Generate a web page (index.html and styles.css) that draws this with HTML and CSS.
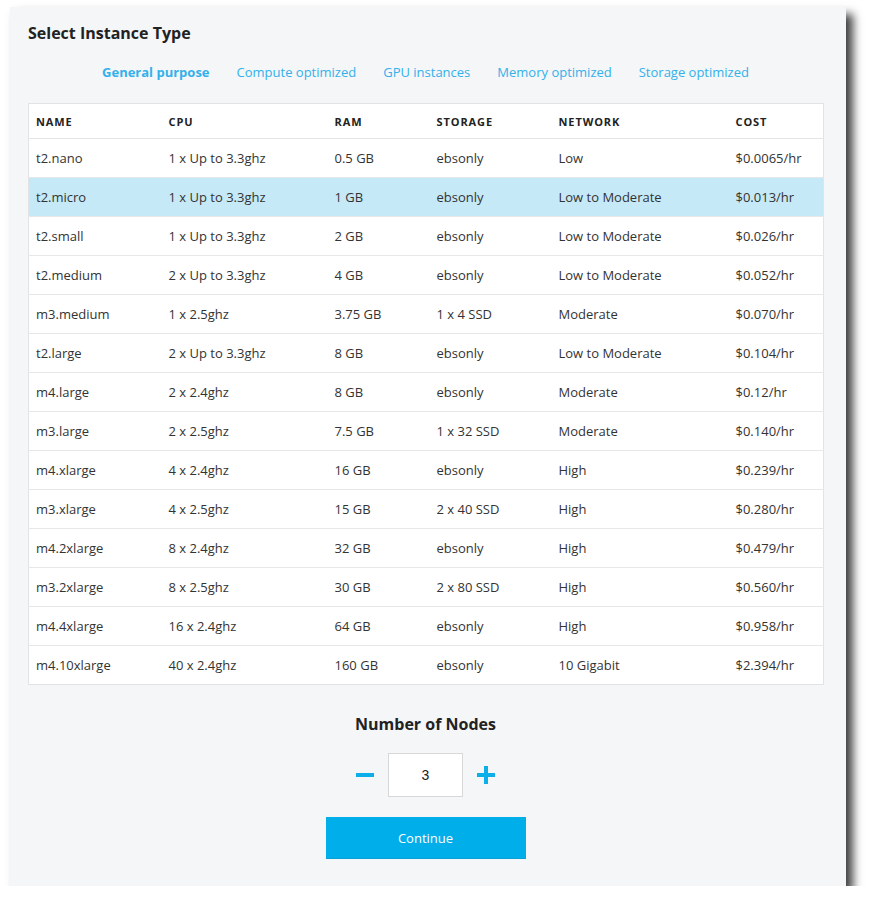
FILE: index.html
```html
<!DOCTYPE html>
<html>
<head>
<meta charset="utf-8">
<link rel="stylesheet" href="styles.css">
</head>
<body>
<div class="panel">
  <h1 class="title">Select Instance Type</h1>
  <nav class="tabs">
    <span class="tab active">General purpose</span>
    <span class="tab">Compute optimized</span>
    <span class="tab">GPU instances</span>
    <span class="tab">Memory optimized</span>
    <span class="tab">Storage optimized</span>
  </nav>
  <table class="grid">
    <colgroup>
      <col class="c1"><col class="c2"><col class="c3"><col class="c4"><col class="c5"><col class="c6">
    </colgroup>
    <thead>
      <tr><th>NAME</th><th>CPU</th><th>RAM</th><th>STORAGE</th><th>NETWORK</th><th>COST</th></tr>
    </thead>
    <tbody>
      <tr><td>t2.nano</td><td>1 x Up to 3.3ghz</td><td>0.5 GB</td><td>ebsonly</td><td>Low</td><td>$0.0065/hr</td></tr>
      <tr class="selected"><td>t2.micro</td><td>1 x Up to 3.3ghz</td><td>1 GB</td><td>ebsonly</td><td>Low to Moderate</td><td>$0.013/hr</td></tr>
      <tr><td>t2.small</td><td>1 x Up to 3.3ghz</td><td>2 GB</td><td>ebsonly</td><td>Low to Moderate</td><td>$0.026/hr</td></tr>
      <tr><td>t2.medium</td><td>2 x Up to 3.3ghz</td><td>4 GB</td><td>ebsonly</td><td>Low to Moderate</td><td>$0.052/hr</td></tr>
      <tr><td>m3.medium</td><td>1 x 2.5ghz</td><td>3.75 GB</td><td>1 x 4 SSD</td><td>Moderate</td><td>$0.070/hr</td></tr>
      <tr><td>t2.large</td><td>2 x Up to 3.3ghz</td><td>8 GB</td><td>ebsonly</td><td>Low to Moderate</td><td>$0.104/hr</td></tr>
      <tr><td>m4.large</td><td>2 x 2.4ghz</td><td>8 GB</td><td>ebsonly</td><td>Moderate</td><td>$0.12/hr</td></tr>
      <tr><td>m3.large</td><td>2 x 2.5ghz</td><td>7.5 GB</td><td>1 x 32 SSD</td><td>Moderate</td><td>$0.140/hr</td></tr>
      <tr><td>m4.xlarge</td><td>4 x 2.4ghz</td><td>16 GB</td><td>ebsonly</td><td>High</td><td>$0.239/hr</td></tr>
      <tr><td>m3.xlarge</td><td>4 x 2.5ghz</td><td>15 GB</td><td>2 x 40 SSD</td><td>High</td><td>$0.280/hr</td></tr>
      <tr><td>m4.2xlarge</td><td>8 x 2.4ghz</td><td>32 GB</td><td>ebsonly</td><td>High</td><td>$0.479/hr</td></tr>
      <tr><td>m3.2xlarge</td><td>8 x 2.5ghz</td><td>30 GB</td><td>2 x 80 SSD</td><td>High</td><td>$0.560/hr</td></tr>
      <tr><td>m4.4xlarge</td><td>16 x 2.4ghz</td><td>64 GB</td><td>ebsonly</td><td>High</td><td>$0.958/hr</td></tr>
      <tr><td>m4.10xlarge</td><td>40 x 2.4ghz</td><td>160 GB</td><td>ebsonly</td><td>10 Gigabit</td><td>$2.394/hr</td></tr>
    </tbody>
  </table>
  <h2 class="nodes-title">Number of Nodes</h2>
  <div class="stepper">
    <button class="step-btn" aria-label="decrease">
      <svg width="18" height="18" viewBox="0 0 18 18"><rect x="0" y="7" width="18" height="4" fill="#0eaee8"/></svg>
    </button>
    <div class="count">3</div>
    <button class="step-btn" aria-label="increase">
      <svg width="18" height="18" viewBox="0 0 18 18"><rect x="0" y="7" width="18" height="4" fill="#0eaee8"/><rect x="7" y="0" width="4" height="18" fill="#0eaee8"/></svg>
    </button>
  </div>
  <div class="actions">
    <button class="continue">Continue</button>
  </div>
</div>
</body>
</html>
```

FILE: styles.css
```css
* { box-sizing: border-box; }
html, body { margin: 0; padding: 0; background: #ffffff; }
body {
  font-family: "Open Sans", "Noto Sans", sans-serif;
  color: #333;
  padding: 7px 0 0 10px;
}
.panel {
  width: 836px;
  height: 879px;
  background: #f5f6f8;
  box-shadow: 7px 7px 9px rgba(0,0,0,0.75);
  padding: 15px 23px 0 18px;
}
.title {
  margin: 0;
  font-size: 16px;
  line-height: 22px;
  font-weight: 700;
  color: #222;
}
.tabs {
  display: flex;
  justify-content: center;
  gap: 27px;
  margin-top: 19px;
  height: 18px;
  line-height: 18px;
  font-size: 13px;
}
.tab { color: #33b1ea; }
.tab.active { font-weight: 700; }
.grid {
  margin-top: 22px;
  width: 795px;
  border-collapse: collapse;
  background: #fff;
  border: 1px solid #e2e3e5;
  table-layout: fixed;
  font-size: 13px;
}
.c1 { width: 133px; } .c2 { width: 166px; } .c3 { width: 102px; }
.c4 { width: 122px; } .c5 { width: 177px; } .c6 { width: 95px; }
.grid th {
  text-align: left;
  font-size: 11px;
  font-weight: 700;
  letter-spacing: 0.9px;
  color: #222;
  height: 35px;
  padding: 0 0 0 7px;
  border-bottom: 1px solid #e4e5e7;
}
.grid td {
  height: 39px;
  padding: 0 0 0 7px;
  color: #333;
  border-bottom: 1px solid #e6e7e9;
  white-space: nowrap;
}
.grid tbody tr:last-child td { border-bottom: none; }
.grid tr.selected td { background: #c6e9f7; }
.nodes-title {
  margin: 28px 0 0;
  text-align: center;
  font-size: 16px;
  line-height: 22px;
  font-weight: 700;
  color: #222;
}
.stepper {
  display: flex;
  justify-content: center;
  align-items: center;
  gap: 14px;
  margin-top: 18px;
}
.step-btn {
  background: none;
  border: none;
  padding: 0;
  width: 18px;
  height: 18px;
  display: flex;
  cursor: pointer;
}
.count {
  width: 75px;
  height: 44px;
  background: #fff;
  border: 1px solid #d8d8d8;
  display: flex;
  align-items: center;
  justify-content: center;
  font-family: "Liberation Sans", Arial, sans-serif;
  font-size: 14px;
  color: #222;
}
.actions {
  display: flex;
  justify-content: center;
  margin-top: 20px;
}
.continue {
  width: 200px;
  height: 42px;
  background: #00aee9;
  border: none;
  border-bottom: 1px solid #0aa0d6;
  color: #fff;
  font-family: "Open Sans", "Noto Sans", sans-serif;
  font-size: 13px;
  cursor: pointer;
}
```
